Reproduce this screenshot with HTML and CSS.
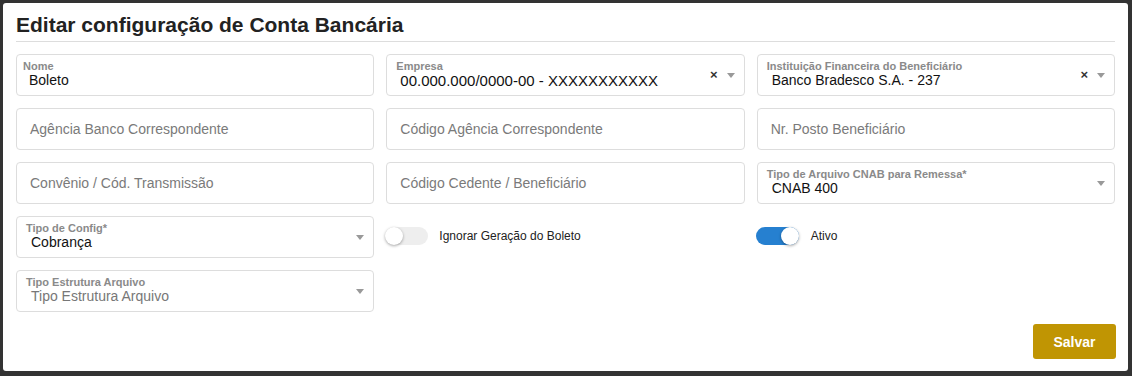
FILE: index.html
```html
<!DOCTYPE html>
<html lang="pt-BR">
<head>
    <meta charset="UTF-8">
    <title>Editar configuração de Conta Bancária</title>
    <link rel="stylesheet" href="styles.css">
</head>
<body>

<div class="modal">
    <h2 class="modal-title">Editar configuração de Conta Bancária</h2>

    <form class="form-grid">
        <!-- linha 1 -->
        <div class="field">
            <span class="field-label">Nome</span>
            <span class="field-value">Boleto</span>
        </div>
        <div class="field select">
            <span class="field-label">Empresa</span>
            <span class="field-value wide">00.000.000/0000-00 - XXXXXXXXXXX</span>
            <span class="clear">×</span>
            <span class="caret"></span>
        </div>
        <div class="field select">
            <span class="field-label">Instituição Financeira do Beneficiário</span>
            <span class="field-value">Banco Bradesco S.A. - 237</span>
            <span class="clear">×</span>
            <span class="caret"></span>
        </div>

        <!-- linha 2 -->
        <div class="field empty"><span class="placeholder">Agência Banco Correspondente</span></div>
        <div class="field empty"><span class="placeholder">Código Agência Correspondente</span></div>
        <div class="field empty"><span class="placeholder">Nr. Posto Beneficiário</span></div>

        <!-- linha 3 -->
        <div class="field empty"><span class="placeholder">Convênio / Cód. Transmissão</span></div>
        <div class="field empty"><span class="placeholder">Código Cedente / Beneficiário</span></div>
        <div class="field select">
            <span class="field-label">Tipo de Arquivo CNAB para Remessa*</span>
            <span class="field-value">CNAB 400</span>
            <span class="caret"></span>
        </div>

        <!-- linha 4 -->
        <div class="field select">
            <span class="field-label">Tipo de Config*</span>
            <span class="field-value">Cobrança</span>
            <span class="caret"></span>
        </div>
        <div class="toggle-row">
            <span class="toggle"><span class="knob"></span></span>
            <span class="toggle-label">Ignorar Geração do Boleto</span>
        </div>
        <div class="toggle-row">
            <span class="toggle on"><span class="knob"></span></span>
            <span class="toggle-label">Ativo</span>
        </div>

        <!-- linha 5 -->
        <div class="field select">
            <span class="field-label">Tipo Estrutura Arquivo</span>
            <span class="field-value muted">Tipo Estrutura Arquivo</span>
            <span class="caret"></span>
        </div>
    </form>

    <div class="actions">
        <button type="button" class="btn-save">Salvar</button>
    </div>
</div>

</body>
</html>
```

FILE: styles.css
```css
body {
    font-family: "Liberation Sans", Arial, sans-serif;
    background-color: #333;
    margin: 0;
    padding: 3px;
}
.modal {
    background-color: #fff;
    width: 1099px;
    height: 342px;
    padding: 0 13px 26px;
    border-radius: 3px;
}
.modal-title {
    margin: 0;
    padding: 10px 0 4px;
    font-size: 21px;
    line-height: 24px;
    font-weight: bold;
    color: #222;
    border-bottom: 1px solid #ddd;
}
.form-grid {
    display: grid;
    grid-template-columns: repeat(3, 1fr);
    grid-auto-rows: 42px;
    column-gap: 12px;
    row-gap: 12px;
    margin-top: 12px;
}
.field {
    position: relative;
    border: 1px solid #ddd;
    border-radius: 4px;
    display: flex;
    flex-direction: column;
    justify-content: center;
    padding: 0 0 0 6px;
}
.field.select {
    padding-left: 9px;
}
.field-label {
    font-size: 11px;
    font-weight: bold;
    color: #8a8a8a;
    line-height: 12px;
    margin-top: -1px;
}
.field-value {
    font-size: 14px;
    color: #111;
    line-height: 17px;
    padding-left: 6px;
}
.field.select .field-value {
    padding-left: 5px;
}
.field.select .field-value.wide {
    font-size: 15px;
    padding-left: 4px;
}
.field-value.muted {
    color: #777;
}
.field.empty {
    padding-left: 13px;
}
.placeholder {
    font-size: 14px;
    color: #7a7a7a;
}
.clear {
    position: absolute;
    right: 26px;
    top: 12px;
    font-size: 13px;
    font-weight: bold;
    color: #333;
}
.caret {
    position: absolute;
    right: 9px;
    top: 18px;
    width: 0;
    height: 0;
    border-left: 4px solid transparent;
    border-right: 4px solid transparent;
    border-top: 5px solid #999;
}
.toggle-row {
    display: flex;
    align-items: center;
    gap: 11px;
    margin-left: -1px;
    margin-top: -2px;
}
.toggle {
    position: relative;
    width: 43px;
    height: 18px;
    border-radius: 9px;
    background-color: #eee;
}
.toggle .knob {
    position: absolute;
    left: 0;
    top: 0;
    width: 18px;
    height: 18px;
    border-radius: 50%;
    background-color: #fff;
    box-shadow: 0 1px 3px rgba(0, 0, 0, 0.35);
}
.toggle.on {
    background-color: #2680d0;
}
.toggle.on .knob {
    left: 25px;
}
.toggle-label {
    font-size: 12px;
    color: #222;
}
.toggle.on + .toggle-label {
    margin-left: 1px;
}
.actions {
    display: flex;
    justify-content: flex-end;
    margin-top: 12px;
}
.btn-save {
    width: 83px;
    height: 35px;
    margin-right: -1px;
    background-color: #c09503;
    color: #fff;
    border: none;
    border-radius: 3px;
    font-family: "Liberation Sans", Arial, sans-serif;
    font-size: 14px;
    font-weight: bold;
    cursor: pointer;
}
```
